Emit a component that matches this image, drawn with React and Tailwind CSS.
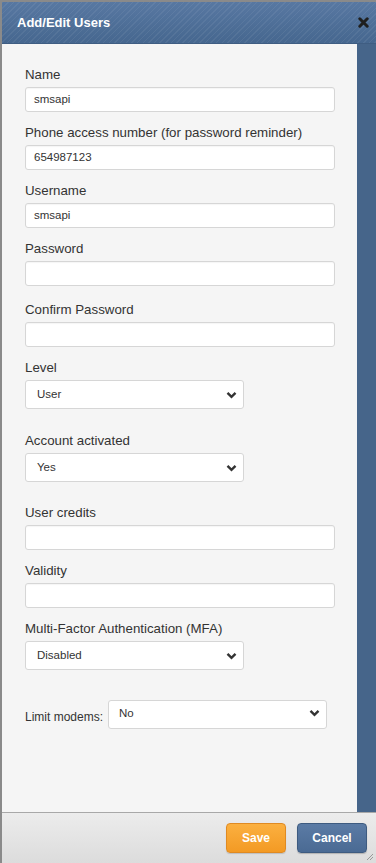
import React from 'react'

const Chevron = () => (
  <svg width="11" height="8" viewBox="0 0 11 8" className="shrink-0">
    <path d="M1.5 1.8 L5.5 5.8 L9.5 1.8" fill="none" stroke="#333" strokeWidth="2.4" />
  </svg>
)

function TextField({ label, value = '', mb = 'mb-[13px]' }) {
  return (
    <div className={mb}>
      <div className="text-[13.3px] leading-[15px] text-[#333] mb-[5px]">{label}</div>
      <div className="h-[25px] w-[310px] bg-white border border-[#d6d6d6] rounded-[3px] flex items-center px-[8px] text-[11.5px] text-[#333] shadow-[inset_0_1px_1px_rgba(0,0,0,0.04)]">
        {value}
      </div>
    </div>
  )
}

function SelectField({ label, value, mb = 'mb-[25px]' }) {
  return (
    <div className={mb}>
      <div className="text-[13.3px] leading-[15px] text-[#333] mb-[5px]">{label}</div>
      <div className="h-[29px] w-[219px] bg-white border border-[#d6d6d6] rounded-[3px] flex items-center justify-between pl-[11px] pr-[6px] text-[11.5px] text-[#333]">
        <span>{value}</span>
        <Chevron />
      </div>
    </div>
  )
}

export default function App() {
  return (
    <div className="w-[376px] h-[863px] flex flex-col bg-[#8a8a8a] pt-[2px] pl-[2px] overflow-hidden"
      style={{ fontFamily: '"Liberation Sans", Arial, sans-serif' }}>
      {/* Header */}
      <div className="h-[42px] shrink-0 flex items-center justify-between pl-[15px] pr-[7px] bg-[#4f719b] bg-[repeating-linear-gradient(135deg,rgba(255,255,255,0.06)_0px,rgba(255,255,255,0.06)_1px,transparent_1px,transparent_4px),linear-gradient(#5878a2,#46678f)] border-b border-[#3f5d82]">
        <span className="text-white font-bold text-[13px]">Add/Edit Users</span>
        <svg width="11" height="11" viewBox="0 0 11 11">
          <path d="M1.8 1.8 L9.2 9.2 M9.2 1.8 L1.8 9.2" stroke="#1f1f1f" strokeWidth="3" strokeLinecap="round" />
        </svg>
      </div>

      {/* Body */}
      <div className="flex-1 flex min-h-0">
        <div className="flex-1 bg-[#f5f5f5] pt-[23px] pl-[23px]">
          <TextField label="Name" value="smsapi" />
          <TextField label="Phone access number (for password reminder)" value="654987123" />
          <TextField label="Username" value="smsapi" />
          <TextField label="Password" mb="mb-[16px]" />
          <TextField label="Confirm Password" />
          <SelectField label="Level" value="User" mb="mb-[24px]" />
          <SelectField label="Account activated" value="Yes" mb="mb-[23px]" />
          <TextField label="User credits" />
          <TextField label="Validity" />
          <SelectField label="Multi-Factor Authentication (MFA)" value="Disabled" mb="mb-[30px]" />
          <div className="flex items-center">
            <span className="text-[12px] text-[#333] mr-[5px] mt-[4px]">Limit modems:</span>
            <div className="h-[29px] w-[219px] bg-white border border-[#d6d6d6] rounded-[3px] flex items-start justify-between pl-[10px] pr-[6px] pt-[6px] text-[11.5px] text-[#333]">
              <span className="leading-[12px]">No</span>
              <span className="mt-[2px]"><Chevron /></span>
            </div>
          </div>
        </div>
        <div className="w-[19px] shrink-0 bg-[#46658a]" />
      </div>

      {/* Footer */}
      <div className="relative h-[51px] shrink-0 border-t border-[#a8a8a8] bg-[linear-gradient(#ececec,#dcdcdc)] flex items-center justify-end gap-[11px] pr-[9px] pb-[1px]">
        <button className="w-[60px] h-[30px] rounded-[4px] border border-[#e08a22] bg-[linear-gradient(#fbb040,#f39a24)] text-white font-bold text-[12px] shadow-[0_1px_1px_rgba(0,0,0,0.15)]">
          Save
        </button>
        <button className="w-[70px] h-[30px] rounded-[4px] border border-[#3e5b80] bg-[linear-gradient(#5b7ba5,#4a6a93)] text-white font-bold text-[12px] shadow-[0_1px_1px_rgba(0,0,0,0.2)]">
          Cancel
        </button>
        <svg className="absolute right-[2px] bottom-[2px]" width="9" height="9" viewBox="0 0 9 9">
          <path d="M8 2 L2 8 M8 5 L5 8" stroke="#999" strokeWidth="1" />
        </svg>
      </div>
    </div>
  )
}
